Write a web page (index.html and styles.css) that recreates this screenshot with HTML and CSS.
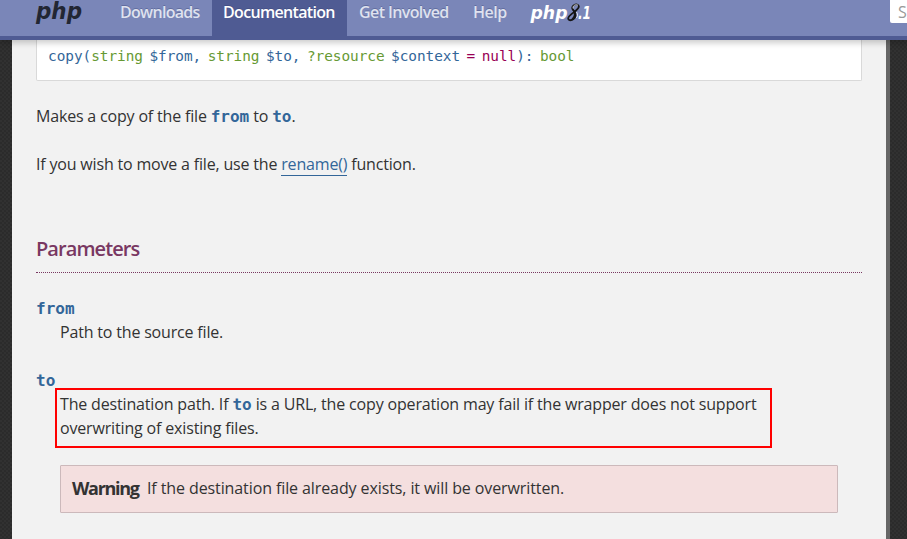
FILE: index.html
```html
<!DOCTYPE html>
<html lang="en">
<head>
<meta charset="utf-8">
<title>PHP: copy - Manual</title>
<link rel="stylesheet" href="styles.css">
</head>
<body>
<header class="navbar">
  <a class="brand"><svg width="50" height="30" viewBox="0 0 50 30"><text x="0" y="19" textLength="46" lengthAdjust="spacingAndGlyphs">php</text></svg></a>
  <nav class="nav">
    <a class="downloads">Downloads</a>
    <a class="documentation active">Documentation</a>
    <a class="involved">Get Involved</a>
    <a class="help">Help</a>
  </nav>
  <a class="release"><svg width="66" height="26" viewBox="0 0 66 26">
    <text x="0.5" y="18.5" textLength="37" lengthAdjust="spacingAndGlyphs">php</text>
    <path d="M48.5 5.5C47 3.4 43.2 4.4 42.2 7.3C41.3 10.2 46 11.3 45.6 15.5C45.2 19.7 38.9 21.9 38.2 18.8C37.6 16 42.6 13.5 46 10.5C48.6 8.2 49.6 6.8 48.5 5.5Z" fill="none" stroke="#151515" stroke-width="1.8"/>
    <path d="M43 8C44 10.5 47.5 12.7 45.2 16.5C44.2 18.7 42.2 19.9 40.5 19.8C44 17 45 13.7 42.5 10Z" fill="#151515"/>
    <path d="M43.2 8.5C42.3 5.6 46 3.8 48 5.4M46.5 12C48 14 47.7 16.5 46.4 18" fill="none" stroke="#fff" stroke-width=".8"/>
    <text class="minor" x="48" y="18.5" textLength="13" lengthAdjust="spacingAndGlyphs">.1</text>
  </svg></a>
  <div class="search">Search</div>
</header>
<main class="page">
  <div class="synopsis">copy(<span class="type">string</span> <span class="param">$from</span>, <span class="type">string</span> <span class="param">$to</span>, <span class="type">?resource</span> <span class="param">$context</span><span class="init"> = null</span>): <span class="type">bool</span></div>
  <p class="t-copy">Makes a copy of the file <code>from</code> to <code>to</code>.</p>
  <p class="t-move">If you wish to move a file, use the <a class="link">rename()</a> function.</p>
  <h3><span>Parameters</span></h3>
  <dl>
    <dt><code>from</code></dt>
    <dd class="t-source">Path to the source file.</dd>
    <dt><code>to</code></dt>
    <dd>
      <div class="highlight"><div class="t-dest">The destination path. If <code>to</code> is a URL, the copy operation may fail if the wrapper does not support</div><div class="t-over">overwriting of existing files.</div></div>
      <div class="warning"><strong>Warning</strong><span>If the destination file already exists, it will be overwritten.</span></div>
    </dd>
  </dl>
</main>
</body>
</html>
```
FILE: styles.css
```css
* { box-sizing: border-box; }
body {
  margin: 0;
  height: 539px;
  overflow: hidden;
  background: #2e2e2e repeating-conic-gradient(#2b2b2b 0 25%, #313131 0 50%) 0 0 / 4px 4px;
  color: #333;
  font: 16px/24px "Open Sans", "Noto Sans", sans-serif;
}
.navbar {
  position: relative;
  display: flex;
  height: 40px;
  background: #7a86b8;
  border-bottom: 4px solid #4f5b93;
  box-shadow: 0 3px 6px rgba(0, 0, 0, .2);
}
.brand { width: 72px; margin-left: 36px; }
.brand svg, .release svg { display: block; overflow: visible; }
.brand text { font: italic bold 23px "DejaVu Sans", sans-serif; fill: #222633; }
.nav { display: flex; height: 36px; font-weight: 600; font-size: 16px; color: #dfe2ef; text-shadow: 0 -1px 0 rgba(50, 60, 110, .35); white-space: nowrap; }
.nav a { padding: 0 12px; }
.downloads { width: 104px; letter-spacing: -.7px; }
.documentation { width: 135px; letter-spacing: -.67px; }
.involved { width: 114px; letter-spacing: -.6px; }
.help { width: 57px; letter-spacing: -.5px; }
.nav .active { padding-left: 11px; background: #4f5b93; color: #fff; }
.release { padding-left: 12px; }
.release text { font: italic bold 17px "DejaVu Sans", sans-serif; fill: #fff; }
.search { width: 17px; height: 23px; margin-left: auto; padding-left: 8px; overflow: hidden; background: #fff; border-radius: 0 0 0 2px; color: #999; }
.page { height: 499px; width: 878px; margin-left: 12px; padding: 0 24px; background: #f2f2f2; border-right: 4px solid #666; }
.synopsis {
  height: 41px;
  width: 826px;
  margin-bottom: 23px;
  padding: 4px 11px;
  background: #fff;
  border: 1px solid #d9d9d9;
  border-top: 0;
  border-radius: 0 0 2px 2px;
  color: #369;
  font: 14.4px/24px "DejaVu Sans Mono", monospace;
  letter-spacing: -.03px;
  word-spacing: -2.2px;
  white-space: nowrap;
}
.type { color: #693; }
.param { color: #369; }
.init { color: #905; }
p { margin: 0 0 24px; white-space: nowrap; }
code { color: #369; font: bold 16px/16px "DejaVu Sans Mono", monospace; letter-spacing: 0; }
.t-copy { letter-spacing: -.18px; }
.t-move { letter-spacing: -.18px; }
.link { color: #369; border-bottom: 1px solid #369; }
h3 { width: 826px; height: 37px; margin: 60px 0 23px; border-bottom: 1px dotted #793862; color: #793862; font-size: 20px; line-height: 26px; font-weight: 600; letter-spacing: -.92px; }
dl { margin: 0; }
dt { height: 24px; }
dd { margin: 0 0 24px 24px; white-space: nowrap; }
.t-source { letter-spacing: -.18px; }
.highlight { width: 717px; height: 60px; margin: -4px 0 17px -5px; padding: 2px 3px; border: 2px solid #f00; }
.t-dest { letter-spacing: -.165px; }
.t-over { letter-spacing: -.16px; }
.warning { display: flex; width: 778px; height: 48px; padding: 10px 11px; background: #f4dfdf; border: 1px solid #ccb9bb; border-radius: 1px; }
.warning strong { width: 75px; font-size: 18px; letter-spacing: -1.3px; }
.warning span { letter-spacing: -.1px; }
```
